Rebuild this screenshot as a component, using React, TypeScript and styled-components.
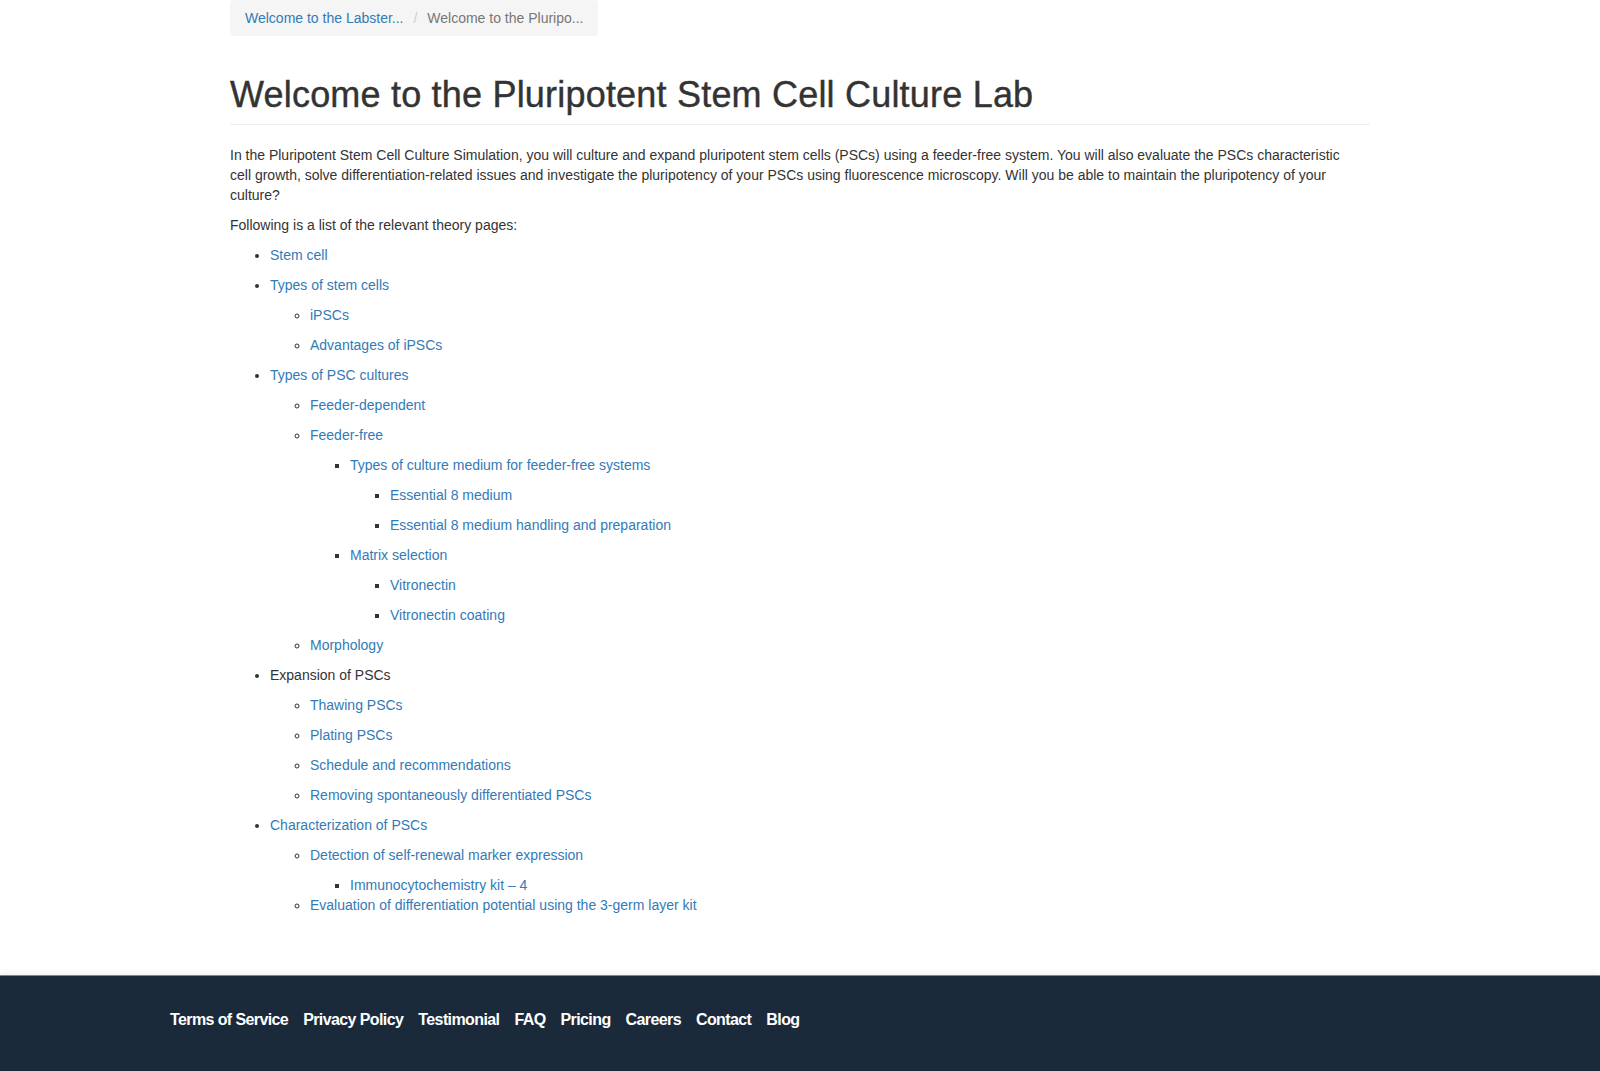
import React from "react";
import styled, { createGlobalStyle } from "styled-components";

const GlobalStyle = createGlobalStyle`
  html, body {
    margin: 0;
    padding: 0;
    background: #ffffff;
  }
  body {
    font-family: "Liberation Sans", Arial, Helvetica, sans-serif;
    font-size: 14px;
    line-height: 20px;
    color: #333333;
  }
  * { box-sizing: border-box; }
`;

const Page = styled.div`
  min-height: 100vh;
  display: flex;
  flex-direction: column;
`;

const Main = styled.main`
  width: 1170px;
  margin: 0 auto;
  padding: 0 15px 50px;
`;

const Breadcrumb = styled.ol`
  display: flex;
  width: fit-content;
  list-style: none;
  margin: 0;
  padding: 8px 15px;
  background: #f5f5f5;
  border-radius: 4px;
  line-height: 20px;
`;

const Crumb = styled.li<{ $active?: boolean }>`
  color: ${(p) => (p.$active ? "#777777" : "#337ab7")};
  &:not(:first-child)::before {
    content: "/\\00a0";
    padding: 0 6px 0 10px;
    color: #cccccc;
  }
`;

const CrumbLink = styled.a`
  color: #337ab7;
  text-decoration: none;
`;

const Title = styled.h1`
  margin: 39px 0 20px;
  padding-bottom: 9px;
  border-bottom: 1px solid #eeeeee;
  font-family: "Liberation Sans", Arial, Helvetica, sans-serif;
  font-size: 36px;
  font-weight: 500;
  letter-spacing: 0.2px;
  line-height: 1.1;
  color: #333333;
  -webkit-text-stroke: 0.4px #333333;
`;

const Paragraph = styled.p`
  margin: 0 0 10px;
  max-width: 1130px;
`;

const List = styled.ul<{ $kind: "disc" | "circle" | "square"; $top?: boolean }>`
  list-style-type: ${(p) => p.$kind};
  margin: ${(p) => (p.$top ? "0 0 10px" : "0")};
  padding-left: 40px;
`;

const Item = styled.li``;

const ItemText = styled.div<{ $tight?: boolean }>`
  margin-bottom: ${(p) => (p.$tight ? "0" : "10px")};
`;

const Link = styled.a`
  color: #337ab7;
  text-decoration: none;
`;

const Footer = styled.footer`
  flex: 1;
  background: #1b2a3b;
  border-top: 1px solid #7d848c;
  box-shadow: 0 -4px 4px rgba(0, 0, 0, 0.04);
`;

const FooterInner = styled.nav`
  width: 1260px;
  margin: 0 auto;
  padding: 34px 0 30px;
  display: flex;
  gap: 15px;
`;

const FooterLink = styled.a`
  color: #ffffff;
  text-decoration: none;
  font-family: "Liberation Sans", Arial, Helvetica, sans-serif;
  font-size: 16px;
  font-weight: 700;
  letter-spacing: -0.6px;
  line-height: 20px;
`;

type Node = {
  label: string;
  link?: boolean;
  tight?: boolean;
  children?: Node[];
};

const tree: Node[] = [
  { label: "Stem cell", link: true },
  {
    label: "Types of stem cells",
    link: true,
    children: [
      { label: "iPSCs", link: true },
      { label: "Advantages of iPSCs", link: true },
    ],
  },
  {
    label: "Types of PSC cultures",
    link: true,
    children: [
      { label: "Feeder-dependent", link: true },
      {
        label: "Feeder-free",
        link: true,
        children: [
          {
            label: "Types of culture medium for feeder-free systems",
            link: true,
            children: [
              { label: "Essential 8 medium", link: true },
              { label: "Essential 8 medium handling and preparation", link: true },
            ],
          },
          {
            label: "Matrix selection",
            link: true,
            children: [
              { label: "Vitronectin", link: true },
              { label: "Vitronectin coating", link: true },
            ],
          },
        ],
      },
      { label: "Morphology", link: true },
    ],
  },
  {
    label: "Expansion of PSCs",
    link: false,
    children: [
      { label: "Thawing PSCs", link: true },
      { label: "Plating PSCs", link: true },
      { label: "Schedule and recommendations", link: true },
      { label: "Removing spontaneously differentiated PSCs", link: true },
    ],
  },
  {
    label: "Characterization of PSCs",
    link: true,
    children: [
      {
        label: "Detection of self-renewal marker expression",
        link: true,
        children: [{ label: "Immunocytochemistry kit – 4", link: true, tight: true }],
      },
      { label: "Evaluation of differentiation potential using the 3-germ layer kit", link: true },
    ],
  },
];

const kinds: Array<"disc" | "circle" | "square"> = ["disc", "circle", "square", "square"];

function TreeList({ nodes, depth }: { nodes: Node[]; depth: number }) {
  return (
    <List $kind={kinds[Math.min(depth, 3)]} $top={depth === 0}>
      {nodes.map((n) => (
        <Item key={n.label}>
          <ItemText $tight={n.tight}>
            {n.link ? <Link href="#">{n.label}</Link> : n.label}
          </ItemText>
          {n.children && <TreeList nodes={n.children} depth={depth + 1} />}
        </Item>
      ))}
    </List>
  );
}

const footerLinks = [
  "Terms of Service",
  "Privacy Policy",
  "Testimonial",
  "FAQ",
  "Pricing",
  "Careers",
  "Contact",
  "Blog",
];

export default function App() {
  return (
    <Page>
      <GlobalStyle />
      <Main>
        <Breadcrumb>
          <Crumb>
            <CrumbLink href="#">Welcome to the Labster...</CrumbLink>
          </Crumb>
          <Crumb $active>Welcome to the Pluripo...</Crumb>
        </Breadcrumb>
        <Title>Welcome to the Pluripotent Stem Cell Culture Lab</Title>
        <Paragraph>
          In the Pluripotent Stem Cell Culture Simulation, you will culture and expand pluripotent stem
          cells (PSCs) using a feeder-free system. You will also evaluate the PSCs characteristic cell
          growth, solve differentiation-related issues and investigate the pluripotency of your PSCs
          using fluorescence microscopy. Will you be able to maintain the pluripotency of your culture?
        </Paragraph>
        <Paragraph>Following is a list of the relevant theory pages:</Paragraph>
        <TreeList nodes={tree} depth={0} />
      </Main>
      <Footer>
        <FooterInner>
          {footerLinks.map((l) => (
            <FooterLink key={l} href="#">
              {l}
            </FooterLink>
          ))}
        </FooterInner>
      </Footer>
    </Page>
  );
}
